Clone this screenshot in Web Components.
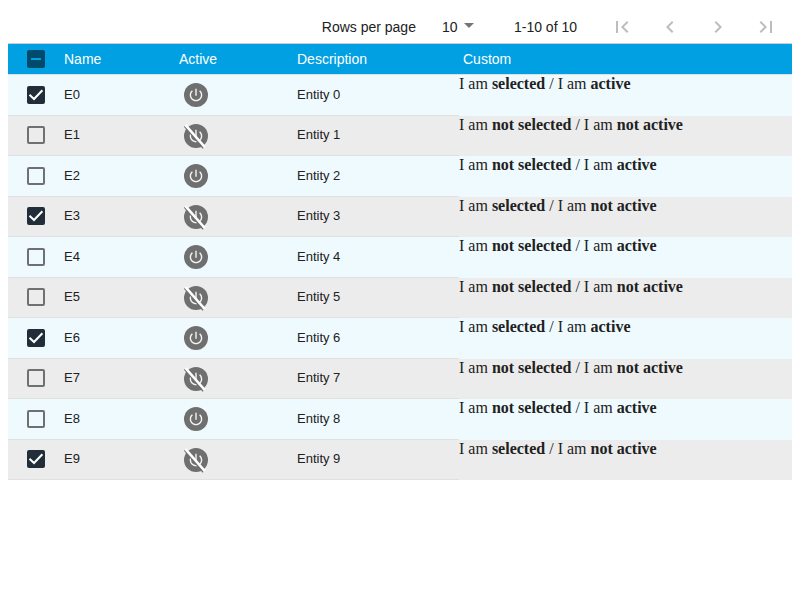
<!DOCTYPE html>
<html lang="en">
<head>
<meta charset="utf-8">
<title>Entities</title>
<style>
  body { margin: 11px 8px 8px; background: #fff; color: #212121; font-family: "Liberation Sans", Arial, sans-serif; font-size: 14px; }
</style>
</head>
<body>
<entity-page></entity-page>
<script>
  class BaseElement extends HTMLElement {
    connectedCallback() {
      if (!this.shadowRoot) this.attachShadow({ mode: "open" }).innerHTML = this.render();
      this.ready();
    }
    ready() {}
  }

  class CheckBox extends BaseElement {
    render() {
      return `
      <style>
        :host { display: block; width: 18px; height: 18px; --fill: #212d39; --mark: #fff; }
        :host([mixed]) { --fill: #004b6b; --mark: #00a0e3; }
        div { display: grid; }
        input, svg { grid-area: 1 / 1; width: 18px; height: 18px; margin: 0; }
        input { appearance: none; box-sizing: border-box; border: 2px solid #6f7072; border-radius: 2px; background: transparent; }
        input:checked, input:indeterminate { background: var(--fill); border-color: var(--fill); }
        svg { pointer-events: none; fill: none; stroke: var(--mark); stroke-width: 2; }
        svg path { display: none; }
        input:checked:not(:indeterminate) ~ svg .tick { display: inline; }
        input:indeterminate ~ svg .dash { display: inline; }
      </style>
      <div>
        <input type="checkbox" aria-label="${this.getAttribute("label")}" ${this.hasAttribute("checked") ? "checked" : ""}>
        <svg viewBox="0 0 18 18" aria-hidden="true"><path class="tick" d="M2.500 8.800l4.500 4.200L15.400 4.200"/><path class="dash" d="M4 9h10"/></svg>
      </div>`;
    }
    ready() { if (this.hasAttribute("mixed")) this.shadowRoot.querySelector("input").indeterminate = true; }
  }

  class PowerIcon extends BaseElement {
    render() {
      const slash = this.hasAttribute("off")
        ? `<path d="M.5 2.200L19.200 24.200" stroke="#6f6f6f" stroke-width="1.500"/><path d="M1.500 1.100L20.800 23" stroke="#fff" stroke-width="2.500"/>` : "";
      return `
      <style>:host { display: block; width: 24px; height: 24px; } svg { display: block; overflow: visible; }</style>
      <svg width="24" height="24" viewBox="0 0 24 24" fill="none" role="img" aria-label="${slash ? "Inactive" : "Active"}">
        <circle cx="12" cy="12" r="12" fill="#6f6f6f"/>
        <path fill="#f4f4f4" transform="translate(3.600 3.600) scale(.7)" d="M13 3h-2v10h2V3zm4.830 2.170l-1.420 1.420C17.990 7.860 19 9.810 19 12c0 3.870-3.130 7-7 7s-7-3.130-7-7c0-2.190 1.010-4.140 2.580-5.420L6.170 5.170C4.230 6.820 3 9.260 3 12c0 4.970 4.030 9 9 9s9-4.030 9-9c0-2.740-1.230-5.180-3.170-6.830z"/>${slash}
      </svg>`;
    }
  }

  class IconButton extends BaseElement {
    render() {
      const paths = {
        first: "M18.410 16.590L13.820 12l4.590-4.590L17 6l-6 6 6 6zM6 6h2v12H6z",
        prev: "M15.410 7.410L14 6l-6 6 6 6 1.410-1.410L10.830 12z",
        next: "M10 6L8.590 7.410 13.170 12l-4.580 4.590L10 18l6-6z",
        last: "M5.590 7.410L10.180 12l-4.590 4.590L7 18l6-6-6-6zM16 6h2v12h-2z"
      };
      return `
      <style>
        :host { display: block; }
        button { display: grid; place-items: center; width: 32px; height: 32px; padding: 0; border: 0; background: none; color: #bdbdbd; }
        svg { fill: currentColor; }
      </style>
      <button type="button" disabled aria-label="${this.getAttribute("label")}">
        <svg width="24" height="24" viewBox="0 0 24 24" aria-hidden="true"><path d="${paths[this.getAttribute("icon")]}"/></svg>
      </button>`;
    }
  }

  class PageSize extends BaseElement {
    render() {
      return `
      <style>
        :host { display: block; }
        div { display: flex; align-items: center; }
        label { margin-right: 26px; }
        span { display: grid; align-items: center; }
        select, svg { grid-area: 1 / 1; }
        select { appearance: none; width: 36px; margin: 0; padding: 0; border: 0; background: none; font: inherit; color: inherit; }
        svg { justify-self: end; margin: 0 4px 4px 0; fill: #757575; pointer-events: none; }
      </style>
      <div>
        <label for="size">Rows per page</label>
        <span><select id="size"><option>10</option><option>25</option><option>50</option></select>
        <svg width="10" height="5" viewBox="0 0 10 5" aria-hidden="true"><path d="M0 0h10L5 5z"/></svg></span>
      </div>`;
    }
  }

  class PaginationBar extends BaseElement {
    render() {
      return `
      <style>
        :host { display: flex; align-items: center; justify-content: flex-end; padding-right: 10px; min-height: 32px; background: #fff; box-shadow: 0 1px 2px rgba(0,0,0,.2), 0 0 2px rgba(0,0,0,.22); margin-bottom: 1px; }
        .range { margin: 0 29px 0 36px; }
        nav { display: flex; gap: 16px; }
      </style>
      <page-size></page-size>
      <span class="range"><slot></slot></span>
      <nav aria-label="Pages">
        <icon-button icon="first" label="First page"></icon-button>
        <icon-button icon="prev" label="Previous page"></icon-button>
        <icon-button icon="next" label="Next page"></icon-button>
        <icon-button icon="last" label="Last page"></icon-button>
      </nav>`;
    }
  }

  class EntityTable extends BaseElement {
    render() {
      const rows = Array.from({ length: 10 }, (_, i) => {
        const selected = i % 3 === 0, active = i % 2 === 0;
        return `<tr>
          <td class="pick"><check-box label="Select E${i}" ${selected ? "checked" : ""}></check-box></td>
          <td>E${i}</td>
          <td class="state"><power-icon ${active ? "" : "off"}></power-icon></td>
          <td>Entity ${i}</td>
          <td class="custom">I am <b>${selected ? "" : "not "}selected</b> / I am <b>${active ? "" : "not "}active</b></td>
        </tr>`;
      }).join("");
      return `
      <style>
        :host { display: block; position: relative; background: #fff; }
        table { width: 100%; border-collapse: separate; border-spacing: 0; table-layout: fixed; }
        .c-pick { width: 48px; } .c-name { width: 115px; } .c-state { width: 118px; } .c-desc { width: 170px; }
        th, td { box-sizing: border-box; padding: 0 8px; text-align: left; border-bottom: 1px solid #e0e0e0; }
        th { height: 31px; background: #00a0e3; background-clip: padding-box; color: #fff; font-size: 14px; font-weight: 400; }
        th:last-child { padding-left: 4px; }
        td { height: 41px; padding-bottom: 2px; font-size: 13px; }
        th.pick, td.pick { padding: 0 0 0 19px; }
        td.state { padding: 0 0 0 13px; }
        tbody tr { background: #effaff; }
        tbody tr:nth-child(even) { background: #ececec; }
        tbody tr:nth-child(even) td { height: 40px; }
        tbody tr:nth-child(even) td.pick { padding-bottom: 1px; }
        td.custom { padding: 0; border: 0; vertical-align: top; font: 16px "Liberation Serif", "Times New Roman", serif; }
      </style>
      <table>
        <colgroup><col class="c-pick"><col class="c-name"><col class="c-state"><col class="c-desc"><col></colgroup>
        <thead><tr>
          <th class="pick" scope="col"><check-box mixed label="Select all"></check-box></th>
          <th scope="col">Name</th><th scope="col">Active</th><th scope="col">Description</th><th scope="col">Custom</th>
        </tr></thead>
        <tbody>${rows}</tbody>
      </table>`;
    }
  }

  class EntityPage extends BaseElement {
    render() {
      return `
      <style>:host { display: block; }</style>
      <pagination-bar>1-10 of 10</pagination-bar>
      <entity-table></entity-table>`;
    }
  }

  customElements.define("check-box", CheckBox);
  customElements.define("power-icon", PowerIcon);
  customElements.define("icon-button", IconButton);
  customElements.define("page-size", PageSize);
  customElements.define("pagination-bar", PaginationBar);
  customElements.define("entity-table", EntityTable);
  customElements.define("entity-page", EntityPage);
</script>
</body>
</html>
